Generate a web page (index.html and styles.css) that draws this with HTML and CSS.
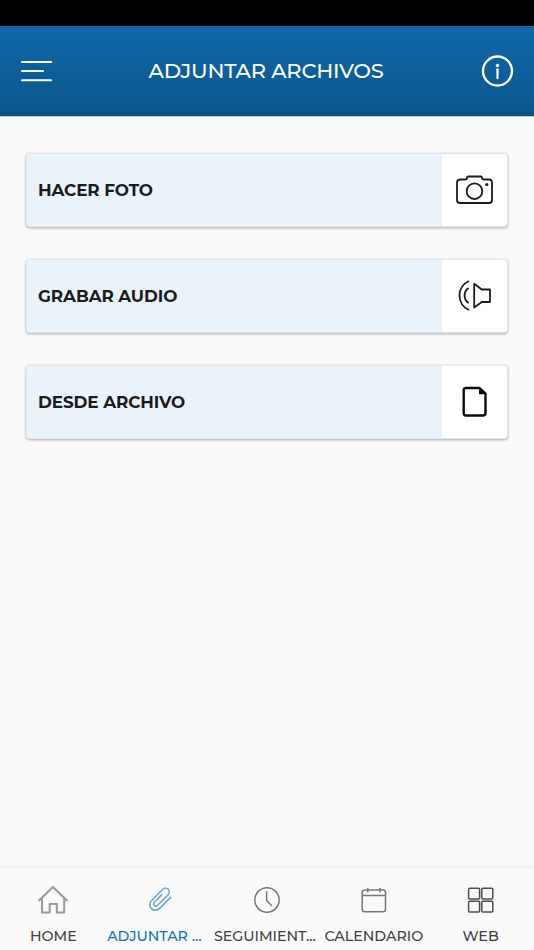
FILE: index.html
```html
<!DOCTYPE html>
<html lang="es">
<head>
<meta charset="utf-8">
<title>Adjuntar archivos</title>
<link rel="stylesheet" href="styles.css">
</head>
<body>
<div class="status"></div>
<header class="header">
  <svg class="menu" width="32" height="24" viewBox="0 0 32 24"><path d="M2 3H31M2 12H23M2 21.300H31"/></svg>
  <h1>ADJUNTAR ARCHIVOS</h1>
  <svg class="info" width="34" height="34" viewBox="0 0 34 34"><circle cx="17.500" cy="17" r="14.500"/><path d="M17.500 15.500V24"/><circle class="dot" cx="17.500" cy="11.500" r="1.800"/></svg>
</header>
<main class="content">
  <section class="card">
    <div class="label">HACER FOTO</div>
    <div class="action"><svg width="40" height="40" viewBox="0 0 40 40"><path d="M5.500 9.500H10Q12 9.500 12 7.700Q12 6.500 13.500 6.500H25.500Q27 6.500 27 7.700Q27 9.500 29 9.500H34Q37 9.500 37 12.500V30Q37 33 34 33H5Q2 33 2 30V12.500Q2 9.500 5.500 9.500Z"/><circle cx="19.500" cy="21.200" r="7.800"/><circle class="solid" cx="31.800" cy="14.500" r="1.600"/></svg></div>
  </section>
  <section class="card">
    <div class="label">GRABAR AUDIO</div>
    <div class="action"><svg width="40" height="40" viewBox="0 0 40 40"><path d="M14 5A15.800 15.800 0 0 0 14 34M13.600 12A9 9 0 0 0 13.600 27M19.200 7.800L26.800 13.500H35V26H26.800L19.200 31.500Z"/></svg></div>
  </section>
  <section class="card">
    <div class="label">DESDE ARCHIVO</div>
    <div class="action"><svg class="file" width="40" height="40" viewBox="0 0 40 40"><path d="M11 6H24.500L30.500 11.700V31Q30.500 33.500 28 33.500H11Q8.700 33.500 8.700 31V8.500Q8.700 6 11 6Z"/><path class="solid" d="M24 6.500V12.300H30Z"/></svg></div>
  </section>
</main>
<nav class="tabs">
  <a class="tab"><svg class="home" width="34" height="32" viewBox="0 0 34 32"><path d="M2.500 17L17 3L31.500 17M6 14V28.500H13.700V20H20.800V28.500H28.200V14"/></svg><span>HOME</span></a>
  <a class="tab active"><svg width="34" height="32" viewBox="0 0 34 32"><path transform="translate(16.300 15.300) rotate(-45)" d="M10.300 6.600H-6.600A5.600 5.600 0 0 1 -6.600 -4.600H9.500A3.800 3.800 0 0 1 9.500 3H-6A2.300 2.300 0 0 1 -6 -1.500H5.500"/></svg><span class="clipped">ADJUNTAR ...</span></a>
  <a class="tab"><svg class="clock" width="34" height="32" viewBox="0 0 34 32"><circle cx="17" cy="16" r="12.200"/><path d="M16.600 7.300V16.400L22 22"/></svg><span class="clipped">SEGUIMIENT...</span></a>
  <a class="tab"><svg class="calendar" width="34" height="32" viewBox="0 0 34 32"><rect x="5.200" y="6" width="23.300" height="21.700" rx="2.500"/><path d="M5.200 11.500H28.500M10.800 4V8.500M23 4V8.500"/></svg><span>CALENDARIO</span></a>
  <a class="tab"><svg class="grid" width="34" height="32" viewBox="0 0 34 32"><rect x="4.600" y="4.200" width="11" height="10.800" rx="1"/><rect x="17.800" y="4.200" width="11" height="10.800" rx="1"/><rect x="4.600" y="17.200" width="11" height="10.800" rx="1"/><rect x="17.800" y="17.200" width="11" height="10.800" rx="1"/></svg><span>WEB</span></a>
</nav>
</body>
</html>
```
FILE: styles.css
```css
* { box-sizing: border-box; }
body {
  margin: 0;
  height: 950px;
  display: flex;
  flex-direction: column;
  overflow: hidden;
  background: #fafafa;
  color: #1b1b1b;
  font-family: Montserrat, Inter, sans-serif;
}
svg { display: block; flex: none; fill: none; stroke: currentColor; stroke-linejoin: round; }
span { white-space: nowrap; }
.status { height: 26px; background: #000; }
.header {
  height: 90px;
  padding: 0 20px;
  display: flex;
  align-items: center;
  justify-content: space-between;
  color: #fff;
  background: linear-gradient(#0f69aa, #0b558a);
  border-bottom: 1px solid #0b4d7d;
  box-shadow: 0 1px 0 #b9d0e0;
}
.header h1 { margin: 0; font-size: 21px; font-weight: 500; line-height: 28px; letter-spacing: -.22px; }
.menu { stroke-width: 2.1; stroke-linecap: round; }
.info { stroke-width: 2.3; stroke-linecap: round; }
.info .dot { fill: #fff; stroke: none; }
.content { flex: 1; padding: 37px 26px 0; display: flex; flex-direction: column; gap: 32px; }
.card {
  height: 74px;
  display: flex;
  overflow: hidden;
  background: #fff;
  border: 1px solid #e3e5e8;
  border-radius: 4px;
  box-shadow: 0 1px 3px rgba(0, 0, 0, .32);
}
.label { flex: 1; display: flex; align-items: center; padding-left: 11px; background: #ebf3fa; font-size: 16.8px; font-weight: 700; letter-spacing: -.08px; }
.action { width: 65px; display: flex; align-items: center; justify-content: center; }
.action svg { stroke-width: 1.8; }
.action .file { stroke-width: 2.4; color: #0b0b0b; }
.action .solid { fill: currentColor; stroke: none; }
.tabs { height: 84px; display: grid; grid-template-columns: repeat(5, 1fr); border-top: 2px solid #f2f2f2; color: #414141; }
.tab { min-width: 0; display: flex; flex-direction: column; align-items: center; padding-top: 16px; font-size: 14.3px; font-weight: 500; line-height: 20px; letter-spacing: -.04px; }
.tab svg { margin-bottom: 10px; stroke-width: 1.5; }
.clipped { align-self: flex-start; padding-left: .4px; }
.active { color: #1272b5; }
.active svg { color: #65a3d0; }
.home { color: #999; }
.tab .home { stroke-width: 2; }
.clock, .calendar { color: #777; }
.grid { color: #4c4c4c; }
```
